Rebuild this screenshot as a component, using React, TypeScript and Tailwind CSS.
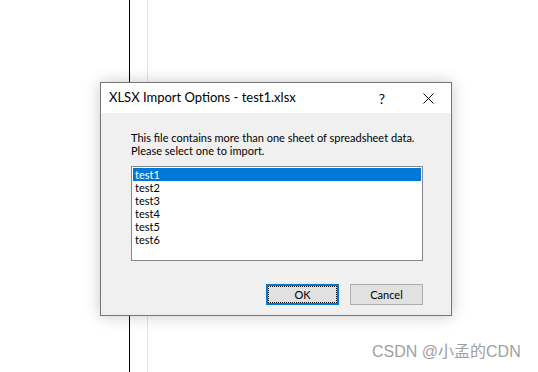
import React from 'react';

const sheets = ['test1', 'test2', 'test3', 'test4', 'test5', 'test6'];

export default function App() {
  return (
    <div className="relative w-[538px] h-[372px] bg-white overflow-hidden" style={{ fontFamily: 'Lato, "Noto Sans CJK SC", sans-serif' }}>
      {/* page behind the dialog */}
      <div className="flex h-full">
        <div className="w-[129px]" />
        <div className="w-px bg-black" />
        <div className="w-[17px]" />
        <div className="w-px bg-[#e3e3e3]" />
      </div>

      <div className="absolute left-[100px] top-[82px] w-[352px] h-[234px] bg-[#f0f0f0] border border-[#767676] shadow-[0_0_14px_rgba(0,0,0,0.22)] flex flex-col">
        <div className="h-[30px] bg-white flex items-center pl-[8px] text-[13px] text-black whitespace-nowrap">
          <span className="flex-1">XLSX Import Options - test1.xlsx</span>
          <span className="w-[46px] text-center text-[14px]">?</span>
          <span className="w-[46px] flex justify-center">
            <svg width="11" height="11" viewBox="0 0 11 11" stroke="#000" strokeWidth="1"><path d="M0.5 0.5 L10.5 10.5 M10.5 0.5 L0.5 10.5" /></svg>
          </span>
        </div>
        <div className="flex flex-col pl-[30px] pr-[28px] pt-[18px] text-[11px] leading-[13px] text-black whitespace-nowrap">
          <p>This file contains more than one sheet of spreadsheet data.</p>
          <p>Please select one to import.</p>
          <div className="mt-[9px] h-[95px] bg-white border border-[#828790] p-px">
            {sheets.map((s, i) => (
              <div key={s} className={`h-[13px] pl-[2px] leading-[13px] ${i === 0 ? 'bg-[#0078d7] text-white' : ''}`}>{s}</div>
            ))}
          </div>
          <div className="flex justify-end gap-[11px] mt-[23px]">
            <button className="w-[73px] h-[21px] bg-[#e1e1e1] border-2 border-[#0078d7] flex items-center justify-center">
              <span className="w-full h-full border border-dotted border-black flex items-center justify-center">OK</span>
            </button>
            <button className="w-[73px] h-[21px] bg-[#e1e1e1] border border-[#adadad]">Cancel</button>
          </div>
        </div>
      </div>

      <div className="absolute left-[372px] top-[342px] text-[16px] leading-[20px] text-[#a0a0a0]" style={{ fontFamily: '"Liberation Sans", "Noto Sans CJK SC", sans-serif' }}>CSDN @小孟的CDN</div>
    </div>
  );
}
